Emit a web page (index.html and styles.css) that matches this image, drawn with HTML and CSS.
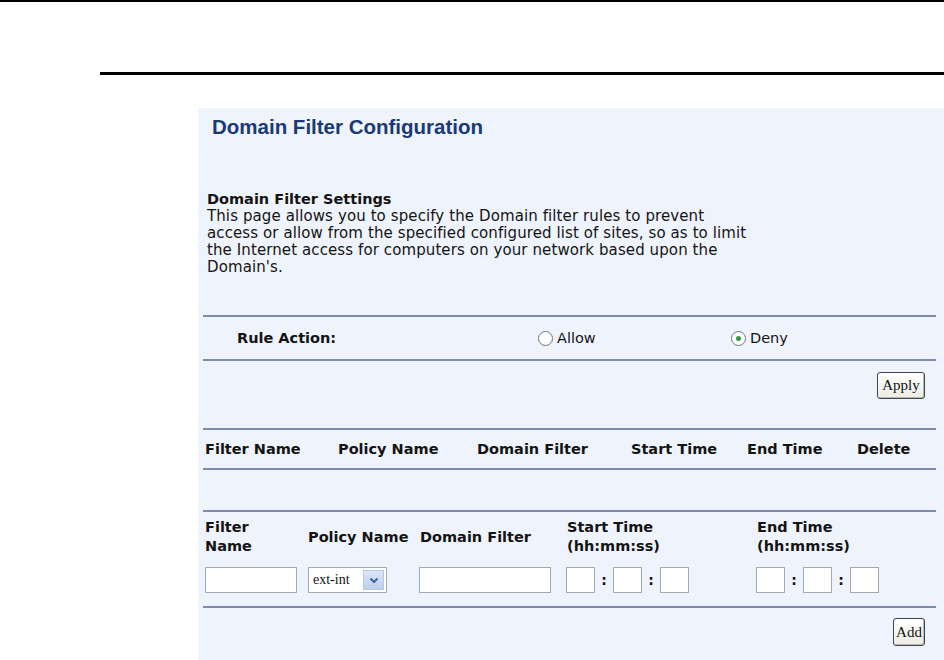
FILE: index.html
```html
<!DOCTYPE html>
<html>
<head>
<meta charset="utf-8">
<title>Domain Filter Configuration</title>
<link rel="stylesheet" href="styles.css">
</head>
<body>
<div class="top-rule"></div>
<div class="page-rule"></div>
<div class="panel">
  <div class="title">Domain Filter Configuration</div>
  <div class="subhead">Domain Filter Settings</div>
  <div class="desc">This page allows you to specify the Domain filter rules to prevent<br>access or allow from the specified configured list of sites, so as to limit<br>the Internet access for computers on your network based upon the<br>Domain's.</div>

  <div class="rules">
    <div class="hr"></div>
    <div class="row-action">
      <div class="c-label">Rule Action:</div>
      <div class="c-allow"><span class="radio"></span>Allow</div>
      <div class="c-deny"><span class="radio checked"></span>Deny</div>
    </div>
    <div class="hr"></div>
    <div class="row-btn apply-row"><button class="btn btn-apply">Apply</button></div>
    <div class="hr"></div>
    <div class="row-head">
      <div class="h1">Filter Name</div>
      <div class="h2">Policy Name</div>
      <div class="h3">Domain Filter</div>
      <div class="h4">Start Time</div>
      <div class="h5">End Time</div>
      <div class="h6">Delete</div>
    </div>
    <div class="hr"></div>
    <div class="row-empty"></div>
    <div class="hr"></div>
    <div class="form">
      <div class="f-labels">
        <div class="f1">Filter<br>Name</div>
        <div class="f2">Policy Name</div>
        <div class="f3">Domain Filter</div>
        <div class="f4">Start Time<br>(hh:mm:ss)</div>
        <div class="f5">End Time<br>(hh:mm:ss)</div>
      </div>
      <div class="f-inputs">
        <div class="f1"><span class="input w-name"></span></div>
        <div class="f2"><span class="select"><span class="sel-text">ext-int</span><span class="sel-btn"><svg width="10" height="7" viewBox="0 0 10 7"><path d="M1.5 1.5 L5 5 L8.5 1.5" fill="none" stroke="#3f62a0" stroke-width="2"/></svg></span></span></div>
        <div class="f3"><span class="input w-domain"></span></div>
        <div class="f4 time"><span class="input w-t"></span><span class="colon">:</span><span class="input w-t"></span><span class="colon">:</span><span class="input w-t"></span></div>
        <div class="f5 time"><span class="input w-t"></span><span class="colon">:</span><span class="input w-t"></span><span class="colon">:</span><span class="input w-t"></span></div>
      </div>
    </div>
    <div class="hr"></div>
    <div class="row-btn add-row"><button class="btn btn-add">Add</button></div>
  </div>
</div>
</body>
</html>
```
FILE: styles.css
```css
html, body {
  margin: 0;
  padding: 0;
  background: #ffffff;
}
body {
  font-family: "DejaVu Sans", "Verdana", sans-serif;
  font-size: 14.5px;
  color: #141414;
  overflow: hidden;
}
.top-rule {
  height: 2px;
  background: #000;
}
.page-rule {
  height: 3px;
  background: #000;
  margin: 70px 0 0 100px;
}
.panel {
  margin: 33px 0 0 198px;
  height: 552px;
  box-sizing: border-box;
  padding-top: 6px;
  background: #eff3fb;
}
.title {
  font-family: "Liberation Sans", Arial, sans-serif;
  font-weight: bold;
  font-size: 20.5px;
  line-height: 26px;
  color: #1a3a74;
  padding-left: 14px;
}
.subhead {
  margin-top: 50px;
  padding-left: 9px;
  font-weight: bold;
  line-height: 18px;
}
.desc {
  padding-left: 9px;
  font-size: 15px;
  letter-spacing: 0.1px;
  line-height: 17px;
}
.rules {
  margin: 39px 8px 0 5px;
}
.hr {
  height: 2px;
  background: #7d8da8;
}
.row-action {
  height: 42px;
  display: flex;
  align-items: center;
}
.c-label {
  width: 301px;
  padding-left: 34px;
  font-weight: bold;
}
.c-allow {
  width: 193px;
  display: flex;
  align-items: center;
}
.c-deny {
  display: flex;
  align-items: center;
}
.radio {
  width: 13px;
  height: 13px;
  border: 1px solid #6b7685;
  border-radius: 50%;
  background: #ffffff;
  margin-right: 4px;
  position: relative;
  box-sizing: content-box;
}
.radio.checked::after {
  content: "";
  position: absolute;
  left: 4px;
  top: 4px;
  width: 5px;
  height: 5px;
  border-radius: 50%;
  background: #2f9a3a;
}
.row-btn {
  display: flex;
  justify-content: flex-end;
  box-sizing: border-box;
  padding-right: 11px;
}
.apply-row {
  height: 67px;
  padding-top: 11px;
}
.add-row {
  padding-top: 10px;
}
.btn {
  font-family: "Liberation Serif", "Times New Roman", serif;
  font-size: 15px;
  color: #111;
  border: 1px solid #3e4550;
  border-radius: 3px;
  background: linear-gradient(#ffffff, #ecece4);
  box-shadow: inset -1px -1px 0 #b9b9b2;
  padding: 0;
  margin: 0;
}
.btn-apply {
  width: 48px;
  height: 27px;
}
.btn-add {
  width: 32px;
  height: 28px;
}
.row-head {
  height: 38px;
  display: flex;
  align-items: center;
  font-weight: bold;
}
.row-head > div {
  padding-left: 2px;
  box-sizing: border-box;
}
.h1 { width: 133px; }
.h2 { width: 139px; }
.h3 { width: 154px; }
.h4 { width: 116px; }
.h5 { width: 110px; }
.h6 { flex: 1; }
.row-empty {
  height: 40px;
}
.form {
  padding: 6px 0 13px;
}
.f-labels, .f-inputs {
  display: flex;
  align-items: center;
}
.f-labels {
  font-weight: bold;
  line-height: 19px;
  height: 38px;
}
.f-inputs {
  margin-top: 11px;
  height: 26px;
}
.f-labels > div, .f-inputs > div {
  padding-left: 2px;
  box-sizing: border-box;
}
.f-labels > .f3 { padding-left: 3px; }
.f-labels > .f4, .f-labels > .f5 { padding-left: 3px; }
.f1 { width: 103px; }
.f2 { width: 111px; }
.f3 { width: 147px; }
.f4 { width: 190px; }
.f5 { flex: 1; }
.time {
  display: flex;
  align-items: center;
}
.input {
  display: block;
  height: 26px;
  box-sizing: border-box;
  border: 1px solid #a2aab6;
  background: #ffffff;
}
.w-name { width: 92px; }
.w-domain { width: 132px; }
.w-t { width: 29px; }
.colon {
  width: 18px;
  text-align: center;
  font-weight: bold;
  font-size: 14px;
}
.select {
  display: flex;
  align-items: center;
  width: 79px;
  height: 26px;
  box-sizing: border-box;
  border: 1px solid #a2aab6;
  background: #ffffff;
  padding: 2px;
}
.sel-text {
  flex: 1;
  font-family: "Liberation Serif", "Times New Roman", serif;
  font-size: 14px;
  padding-left: 2px;
  color: #111;
}
.sel-btn {
  width: 21px;
  height: 20px;
  display: flex;
  align-items: center;
  justify-content: center;
  background: linear-gradient(#dce7f8, #bccfec);
  border: 1px solid #b7c8e4;
  box-sizing: border-box;
}
```
